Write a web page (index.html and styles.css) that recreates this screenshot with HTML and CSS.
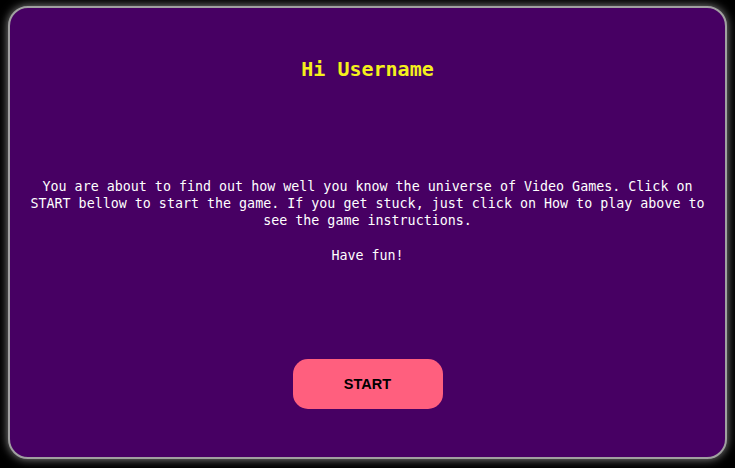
FILE: index.html
```html
<!DOCTYPE html>
<html>
<head>
<meta charset="utf-8">
<link rel="stylesheet" href="styles.css">
</head>
<body>
<div class="card">
  <h1 class="title">Hi Username</h1>
  <p class="intro">You are about to find out how well you know the universe of Video Games. Click on START bellow to start the game. If you get stuck, just click on How to play above to see the game instructions.</p>
  <p class="outro">Have fun!</p>
  <button class="start">START</button>
</div>
</body>
</html>
```
FILE: styles.css
```css
html, body {
  margin: 0;
  background: #000;
}
body {
  padding: 6px 8px 0;
  box-sizing: border-box;
  height: 468px;
}
.card {
  box-sizing: border-box;
  height: 453px;
  background: #470063;
  border: 2px solid #a0a0a0;
  border-radius: 20px;
  box-shadow: 0 0 10px rgba(255,255,255,0.55);
  display: flex;
  flex-direction: column;
  align-items: center;
  font-family: "DejaVu Sans Mono", monospace;
  color: #fff;
}
.title {
  margin: 49px 0 0;
  font-size: 20px;
  line-height: 24px;
  font-weight: bold;
  color: #f4f01c;
}
.intro {
  margin: 97px 20px 0;
  font-size: 13.33px;
  line-height: 17px;
  text-align: center;
}
.outro {
  margin: 18px 0 0;
  font-size: 13.33px;
  line-height: 17px;
}
.start {
  margin-top: 95px;
  width: 150px;
  height: 50px;
  border: none;
  border-radius: 15px;
  background: #ff5f7e;
  color: #000;
  font-family: "Liberation Sans", Arial, sans-serif;
  font-weight: bold;
  font-size: 14.5px;
}
```
